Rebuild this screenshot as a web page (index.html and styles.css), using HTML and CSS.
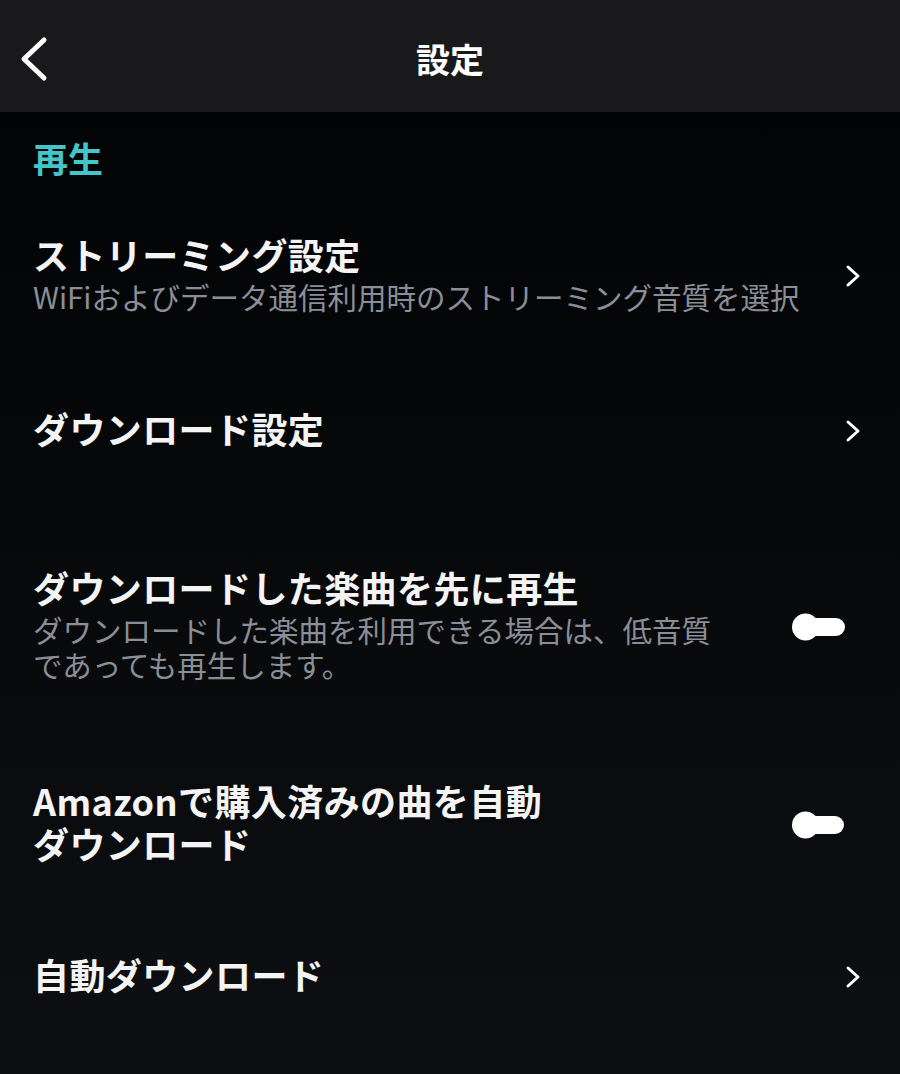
FILE: index.html
```html
<!DOCTYPE html>
<html lang="ja">
<head>
    <meta charset="UTF-8">
    <meta name="viewport" content="width=device-width, initial-scale=1.0">
    <title>設定</title>
    <link rel="stylesheet" href="styles.css">
</head>
<body>
    <header class="top-bar">
        <div class="back">
            <svg width="30" height="46" viewBox="0 0 30 46">
                <polyline points="25,4 5,23 25,42" fill="none" stroke="#fff" stroke-width="5" stroke-linecap="round" stroke-linejoin="round"/>
            </svg>
        </div>
        <h1>設定</h1>
        <div></div>
    </header>

    <main class="settings">
        <h2 class="section-title">再生</h2>

        <div class="row row-1">
            <div class="row-text">
                <div class="title">ストリーミング設定</div>
                <div class="sub">WiFiおよびデータ通信利用時のストリーミング音質を選択</div>
            </div>
            <svg class="chevron" width="18" height="26" viewBox="0 0 18 26">
                <polyline points="4,4 14,13 4,22" fill="none" stroke="#fff" stroke-width="3" stroke-linecap="round" stroke-linejoin="round"/>
            </svg>
        </div>

        <div class="row row-2">
            <div class="row-text">
                <div class="title">ダウンロード設定</div>
            </div>
            <svg class="chevron" width="18" height="26" viewBox="0 0 18 26">
                <polyline points="4,4 14,13 4,22" fill="none" stroke="#fff" stroke-width="3" stroke-linecap="round" stroke-linejoin="round"/>
            </svg>
        </div>

        <div class="row row-3">
            <div class="row-text">
                <div class="title">ダウンロードした楽曲を先に再生</div>
                <div class="sub">ダウンロードした楽曲を利用できる場合は、低音質であっても再生します。</div>
            </div>
            <svg class="toggle" width="54" height="28" viewBox="0 0 54 28">
                <rect x="10" y="5" width="43" height="18" rx="9" fill="#fff"/>
                <circle cx="13.5" cy="14" r="13.5" fill="#fff"/>
            </svg>
        </div>

        <div class="row row-4">
            <div class="row-text">
                <div class="title">Amazonで購入済みの曲を自動</div>
                <div class="title">ダウンロード</div>
            </div>
            <svg class="toggle" width="54" height="28" viewBox="0 0 54 28">
                <rect x="10" y="5" width="42" height="18" rx="9" fill="#fff"/>
                <circle cx="13.5" cy="14" r="13.5" fill="#fff"/>
            </svg>
        </div>

        <div class="row row-5">
            <div class="row-text">
                <div class="title">自動ダウンロード</div>
            </div>
            <svg class="chevron" width="18" height="26" viewBox="0 0 18 26">
                <polyline points="4,4 14,13 4,22" fill="none" stroke="#fff" stroke-width="3" stroke-linecap="round" stroke-linejoin="round"/>
            </svg>
        </div>
    </main>
</body>
</html>
```

FILE: styles.css
```css
body {
    margin: 0;
    min-height: 100vh;
    font-family: "Noto Sans CJK JP", "Noto Sans", sans-serif;
    color: #f4f4f4;
    background: linear-gradient(180deg, #020304 10%, #0d0f12 100%);
}
.top-bar {
    height: 112px;
    background: #19191b;
    display: grid;
    grid-template-columns: 1fr auto 1fr;
    align-items: center;
}
.back {
    padding-left: 19px;
    padding-top: 6px;
    display: flex;
}
.top-bar h1 {
    margin: 0;
    padding-top: 4px;
    font-size: 34px;
    font-weight: 700;
    color: #fff;
}
.section-title {
    margin: 0;
    padding: 24px 0 16px 33px;
    font-size: 35px;
    line-height: 44px;
    font-weight: 700;
    color: #42c6ca;
}
.row {
    display: flex;
    align-items: center;
    padding: 0 38px 0 33px;
}
.row-1 { height: 160px; }
.row-2 { height: 150px; }
.row-3 { height: 242px; }
.row-4 { height: 154px; }
.row-5 { height: 150px; }
.row-text {
    flex: 1;
    min-width: 0;
    margin-bottom: 6px;
}
.title {
    font-size: 36px;
    line-height: 43px;
    font-weight: 700;
    letter-spacing: 0.4px;
}
.sub {
    margin-top: 3px;
    font-size: 29.5px;
    line-height: 35px;
    color: #8b8e97;
}
.chevron {
    flex: none;
    margin-left: 16px;
}
.toggle {
    flex: none;
    margin-left: 60px;
    margin-right: 16px;
}
```
